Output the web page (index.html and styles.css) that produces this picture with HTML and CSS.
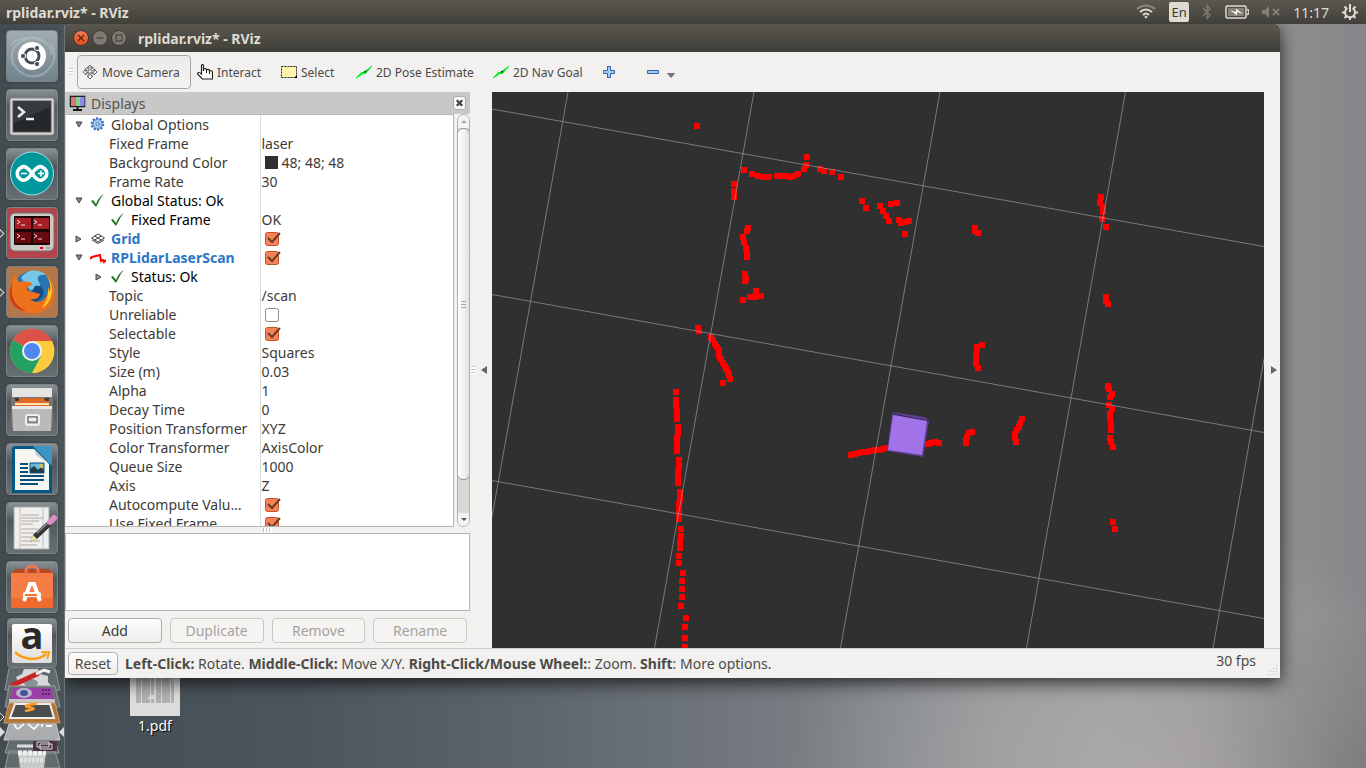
FILE: index.html
```html
<!DOCTYPE html>
<html lang="en">
<head>
<meta charset="utf-8">
<title>rplidar.rviz* - RViz</title>
<link rel="stylesheet" href="styles.css">
</head>
<body>
<header class="panel">
  <span class="panel-title">rplidar.rviz* - RViz</span>
  <div class="indicators">
    <svg width="20" height="16" viewBox="0 0 20 16" fill="none" stroke="#dfdbd2" stroke-width="2"><path d="M1 5Q10-2 19 5" stroke="#8b8880"/><path d="M4 8Q10 3 16 8M7 11Q10 8 13 11"/><circle cx="10" cy="13" r="1" fill="#dfdbd2" stroke-width="1"/></svg>
    <span class="lang">En</span>
    <svg width="10" height="16" viewBox="0 0 10 16" fill="none" stroke="#7d7b74" stroke-width="1.3"><path d="M1 4l7 7-3 3.500V1.500L8 5l-7 7"/></svg>
    <svg width="24" height="14" viewBox="0 0 24 14"><rect x="1" y="1" width="20" height="12" rx="1.500" fill="none" stroke="#dfdbd2" stroke-width="1.500"/><rect x="3" y="3" width="16" height="8" fill="#85827a"/><path d="M22 4.500q2 0 2 2.500t-2 2.500" fill="none" stroke="#dfdbd2" stroke-width="1.500"/><path d="M5 5l6 2V3.500l7 5.500-6-2v3.500z" fill="#f4f1ea"/></svg>
    <svg width="18" height="12" viewBox="0 0 18 12"><path d="M0 4h3l4-4v12L3 8H0z" fill="#817f77"/><path d="M11 3l6 6m0-6l-6 6" stroke="#817f77" stroke-width="2"/></svg>
    <span class="clock">11:17</span>
    <svg width="16" height="16" viewBox="0 0 16 16" fill="none" stroke="#dfdbd2"><path d="M5.500 4a5 5 0 1 0 5 0M8 0v8" stroke-width="2"/><path d="M2.500 2.500l2 2m9-2l-2 2M0 8.500h3m10 0h3M2.500 14l2-2m9 2l-2-2M8 13v3" stroke-width="2"/></svg>
  </div>
</header>

<div class="desktop">
<nav class="launcher" aria-label="Launcher">
  <button class="tile dash" aria-label="Search"><svg viewBox="0 0 52 52"><path d="M5 15C17 2 45 7 46 25M8 36C-2 18 20 2 36 10M45 14c10 17-4 32-18 32M42 40C28 55 5 42 6 24" fill="none" stroke="#c4cdd1" stroke-opacity=".4" stroke-width="2"/><circle cx="26" cy="26" r="14" fill="#fff"/><circle cx="26" cy="26" r="7" fill="none" stroke="#42505a" stroke-width="3"/><g fill="#42505a" stroke="#fff"><circle cx="17" cy="26" r="2.600"/><circle cx="31" cy="18" r="2.600"/><circle cx="31" cy="34" r="2.600"/></g></svg></button>
  <button class="tile" aria-label="Terminal"><svg viewBox="0 0 52 52"><rect x="4" y="9" width="44" height="37" rx="2" fill="#d8d8d8" stroke="#8c8c8c"/><rect x="7" y="12" width="38" height="31" fill="#25282a" stroke="#555"/><path d="M8 13h36v5L8 34z" fill="#fff" opacity=".09"/><path d="M12 18l6 5-6 5M20 30h8" fill="none" stroke="#eee" stroke-width="2.500"/></svg></button>
  <button class="tile" aria-label="Arduino"><svg viewBox="0 0 52 52"><circle cx="26" cy="25.500" r="21.500" fill="#00979c" stroke="#a4dfe0"/><path d="M26 25.500c-4-6-8-8-11-6-5 3-5 9 0 12 3 2 7 0 11-6s8-8 11-6c5 3 5 9 0 12-3 2-7 0-11-6z" fill="none" stroke="#fff" stroke-width="3.500"/><path d="M15 25.500h6M32 25.500h6m-3-3v6" stroke="#fff" stroke-width="1.600"/></svg></button>
  <button class="tile running red" aria-label="Terminator"><svg viewBox="0 0 52 52"><rect x="4" y="6" width="44" height="38" rx="5" fill="#c9c9c5" stroke="#74716e"/><rect x="8" y="9" width="36" height="29" rx="1" fill="#1e0607"/><path d="M9 11h16v11H9zM27 11h16v11H27z" fill="#a81e25"/><path d="M9 25h16v11H9zM27 25h16v11H27z" fill="#690911"/><path d="M11 13l3 2-3 2m4 1h4M28 13l3 2-3 2m4 1h4M11 27l3 2-3 2m4 1h4M28 27l3 2-3 2m4 1h4" fill="none" stroke="#f5d5d5"/><path d="M34 41h3" stroke="#e00" stroke-width="2"/><path d="M40 41h4" stroke="#888"/></svg></button>
  <button class="tile running orange" aria-label="Firefox"><svg viewBox="0 0 52 52"><circle cx="27" cy="25" r="20" fill="#2774ae"/><path d="M15 12c5-9 18-10 25-3-8-1-10 3-7 7 3 5-2 11-9 8z" fill="#76c6e9"/><path d="M29 20c8-2 11 7 6 12-6 6-10 4-14 1z" fill="#174c83"/><path d="M8 8l5 8c3-1 6-1 8 0 3-1 5 1 5 3l-5 2c-1 4 2 4 6 5l7 2c-1 5-6 6-10 5 8 7 19 1 18-12 2 2 2 5 1 7 5-6 1-15-3-19 7 4 9 13 8 20-2 14-13 20-25 18C8 44 2 35 4 24c1-5 3-9 4-16z" fill="#ee721c"/><path d="M7 16c-4 14 1 23 13 29C8 44 2 34 4 23z" fill="#cc3c14"/><path d="M41 10c9 11 5 27-5 32 4-6 7-12 6-20l2 4c1-6 0-11-3-16z" fill="#ffc925"/></svg></button>
  <button class="tile" aria-label="Chrome"><svg viewBox="0 0 52 52"><circle cx="26" cy="26" r="22" fill="#fbc935"/><path d="M26 26L7 15A22 22 0 0 1 46 16H26z" fill="#dc5148"/><path d="M7 15A22 22 0 0 0 26 48l9-17-9-5z" fill="#22a163"/><path d="M26 16h20a22 22 0 0 1-20 32l10-17z" fill="#fdcb3e"/><circle cx="26" cy="26" r="10" fill="#f3f3ee"/><circle cx="26" cy="26" r="8" fill="#4f87ee"/></svg></button>
  <button class="tile" aria-label="Files"><svg viewBox="0 0 52 52"><path d="M6 4h40v10H6z" fill="#e5e4e2"/><path d="M5 13h42v30H5z" fill="#777674"/><path d="M9 14h34v9H9z" fill="#433a34"/><path d="M13 14h25l1 3h4v6H9v-6h4z" fill="#dd6b28"/><path d="M9 19h34v2H9z" fill="#ffe2ad"/><path d="M6 22h40l-1 25H7z" fill="#bbbab8"/><path d="M6 22h40v3H6z" fill="#e9e8e6"/><rect x="20" y="31" width="13" height="10" rx="2" fill="#bbb" stroke="#eee" stroke-width="2"/><rect x="22" y="33" width="9" height="5" fill="#eee" stroke="#555"/></svg></button>
  <button class="tile" aria-label="LibreOffice Writer"><svg viewBox="0 0 52 52"><path d="M8 3h27l11 16v31H6V5z" fill="#075785"/><path d="M27 3h19v20z" fill="#3e94c3"/><path d="M9 6h19l15 15v26H9z" fill="#f7f6f2"/><path d="M28 6l15 15-13-9z" fill="#bfcdd4"/><path d="M14 21h8M14 25h8M14 29h8M14 33h24M14 37h24M14 41h18" stroke="#07517b" stroke-width="2"/><path d="M24 20h14v10H24z" fill="#65b9e0"/><path d="M24 30v-4l4-3 4 4 3-3 3 3v3z" fill="#253b47"/><circle cx="35" cy="23" r="2" fill="#e4c537"/><path d="M24 20h14v10H24z" fill="none" stroke="#07517b"/></svg></button>
  <button class="tile" aria-label="Text Editor"><svg viewBox="0 0 52 52"><path d="M8 5h35v42H8z" fill="#efefec" stroke="#aaa"/><path d="M14 5v42" stroke="#e7b3b3"/><path d="M37 5v42" stroke="#b3bfe7"/><path d="M15 13h18M15 16h22M15 19h18M15 22h12M15 27h17M15 31h16M15 35h13M15 39h19M15 43h16" stroke="#aaa"/><path d="M24 40l3-7 15-14 4 4-15 14z" fill="#343737"/><path d="M31 31l12-11" stroke="#8c9190" stroke-width="1.500"/><path d="M24 40l3-7 4 4z" fill="#eee29a"/><path d="M44 20l4-4" stroke="#d88fc4" stroke-width="6" stroke-linecap="round"/></svg></button>
  <button class="tile" aria-label="Software"><svg viewBox="0 0 52 52"><path d="M5 12l5-4h33l4 4z" fill="#b54a24"/><path d="M5 12h42v35H5z" fill="#ee6a2f"/><path d="M5 12h42v25H5z" fill="#f57c43"/><path d="M20 17V9c0-5 12-5 12 0v8" fill="none" stroke="#eb7757" stroke-width="3"/><path d="M18 40l6-17h4l6 17" fill="none" stroke="#fff" stroke-width="4"/><rect x="17" y="31" width="18" height="5" rx="2" fill="#fff"/><path d="M19 34h12" stroke="#f37336" stroke-width="2"/></svg></button>
  <button class="tile amazon" aria-label="Amazon"><span class="amazon-card"><b>a</b><svg viewBox="0 0 40 12"><path d="M2 2c10 9 24 9 33 2" fill="none" stroke="#f90" stroke-width="2.500"/><path d="M30 2h8l-2 7" fill="none" stroke="#f90" stroke-width="2"/></svg></span></button>
  <svg class="folded" viewBox="0 668 65 100" role="img" aria-label="More applications">
    <path d="M9 668h46l5 22H5z" fill="#626a6e" stroke="#92999c"/>
    <path d="M12 687c0-4 3-5 6-5l-2-5 6-3 2-5h14l2 5 8 2v6l4 5z" fill="#d8d9d7"/><ellipse cx="31" cy="683" rx="7" ry="4" fill="#899295"/><path d="M13 685l24-11" stroke="#c92328" stroke-width="5" stroke-linecap="round"/><path d="M36 674l8-4 6 2" fill="none" stroke="#f4f4f4" stroke-width="3"/>
    <path d="M9 686h46l5 21H5z" fill="#687075" stroke="#92999c"/><path d="M13 688h38l3 12H10z" fill="#9a3fa6"/><path d="M9 699h46v4H9z" fill="#c7c7c9"/><ellipse cx="24" cy="693" rx="8" ry="5" fill="#b8b8c9"/><ellipse cx="24" cy="693" rx="4" ry="3" fill="#455298"/><path d="M42 690h9m-9 4h9" stroke="#5f2168" stroke-width="2" stroke-dasharray="2 1"/>
    <path d="M9 703h46l5 20H4z" fill="#b5763a" stroke="#cf9c65"/><path d="M15 704h35l4 14H10z" fill="#4a4d4e" stroke="#eee" stroke-width="2"/><path d="M37 704c-8 0-15 2-9 3s10 2-3 4" fill="none" stroke="#ff9b28" stroke-width="2.500"/>
    <path d="M9 724h47l4 16H4z" fill="#aaacad" stroke="#ccc"/><path d="M14 724l3 5M24 724l-6 5M28 724l6 5 5-5M42 724v3M46 726h6" fill="none" stroke="#f4f4f4" stroke-width="2"/>
    <path d="M9 740h46l4 13H5zM9 751h46l5 17H5z" fill="#626b6e" stroke="#92999c"/><path d="M18 752h28l-2 16H20z" fill="#c5cbc8"/><path d="M17 746h18" stroke="#d8dedb" stroke-width="3"/><path d="M18 753h28" stroke="#eef0ee" stroke-width="5" stroke-dasharray="4 1"/><path d="M20 760h24" stroke="#dde1de" stroke-width="5" stroke-dasharray="3 1"/><path d="M33 741h24v10H33z" fill="#4b3141"/><path d="M37 742h12v5H37zM40 744h12v5H40z" fill="#4b3141" stroke="#ddd"/>
    <path d="M0 713l4 4-4 4" fill="none" stroke="#ddd"/><path d="M0 727l5 5-5 5zM64 727l-5 5 5 5z" fill="#ddd"/>
  </svg>
</nav>

<main class="workspace">
  <a class="file" href="#pdf"><svg width="50" height="50" viewBox="0 0 50 50"><rect width="50" height="50" rx="1" fill="#dcdcdc"/><path d="M6 6h18M6 8h18M6 10h18M6 12h18M6 14h18M6 16h18M6 18h18M6 20h18M6 22h18M6 24h18M6 26h18M6 28h18M6 30h14M6 32h12M6 34h18M6 36h18M26 6h18M26 8h18M26 10h18M26 12h18M26 14h16M26 16h18M26 18h18M26 20h18M26 22h18M26 24h18M26 26h18M26 28h18M26 30h18M26 32h18M26 34h18M26 36h18" stroke="#888" stroke-dasharray="5 1 8 1"/></svg><span>1.pdf</span></a>

  <section class="window">
    <header class="titlebar">
      <button class="wm close" aria-label="Close"><svg viewBox="0 0 16 16"><path d="M5 5l6 6m0-6l-6 6" stroke="#5b2310" stroke-width="1.200"/></svg></button>
      <button class="wm" aria-label="Minimize"><svg viewBox="0 0 16 16"><path d="M4.500 8h7" stroke="#3b3a35"/></svg></button>
      <button class="wm" aria-label="Maximize"><svg viewBox="0 0 16 16"><rect x="5" y="5" width="6" height="6" fill="none" stroke="#3b3a35"/></svg></button>
      <h1>rplidar.rviz* - RViz</h1>
    </header>

    <div class="toolbar" role="toolbar">
      <span class="grip"></span>
      <button class="tool active"><svg viewBox="0 0 16 16"><path d="M8 1l3 3H9v3h3V5l3 3-3 3V9H9v3h2l-3 3-3-3h2V9H4v2L1 8l3-3v2h3V4H5z" fill="#fff" stroke="#444" stroke-width=".8"/><ellipse cx="8" cy="6" rx="5" ry="3" fill="none" stroke="#555" stroke-width=".7"/></svg>Move Camera</button>
      <button class="tool"><svg viewBox="0 0 16 16"><path d="M4.500 10V2c0-2 2-2 2 0v5V5c2-1 3 0 3 1 1-1 3-1 3 1 2-1 3 0 3 2v6h-10l-5-5c0-2 2-2 4 0z" fill="#fff" stroke="#222" stroke-width="1.200"/><path d="M9.500 6v3m3-2v3" stroke="#222"/></svg>Interact</button>
      <button class="tool"><svg viewBox="0 0 16 16"><path d="M.5 2.500h15v11H.5z" fill="#fff3b0" stroke="#222" stroke-dasharray="2 1"/><path d="M16 11v3h-3z"/></svg>Select</button>
      <button class="tool"><svg viewBox="0 0 16 16"><path d="M0 14l6-6 1 1 9-7-7 8-1-1z" fill="#0f3" stroke="#0e2"/><path d="M7 8l4-2-2 3z" fill="#064c12"/></svg>2D Pose Estimate</button>
      <button class="tool"><svg viewBox="0 0 16 16"><path d="M0 14l6-6 1 1 9-7-7 8-1-1z" fill="#0f3" stroke="#0e2"/><path d="M7 8l4-2-2 3z" fill="#064c12"/></svg>2D Nav Goal</button>
      <button class="tool" aria-label="Add tool"><svg viewBox="0 0 16 16"><path d="M4.500 2.500h3v4h4v3h-4v4h-3v-4h-4v-3h4z" fill="#a9cdf1" stroke="#2d63a8"/></svg></button>
      <button class="tool" aria-label="Remove tool"><svg viewBox="0 0 16 16"><path d="M.5 6.500h11v3H.5z" fill="#a9cdf1" stroke="#2d63a8"/></svg><svg class="caret" viewBox="0 0 8 16"><path d="M.5 9.500h7l-3.500 4z" fill="#777" stroke="#555" stroke-width=".7"/></svg></button>
    </div>

    <div class="content">
      <section class="displays">
        <header class="dock-title">
          <svg width="17" height="16" viewBox="0 0 17 16"><rect x=".7" y=".7" width="15.600" height="11.600" fill="#222"/><path d="M2 2h4.500v9H2z" fill="#d8777b"/><path d="M6.500 2h4.500v9H6.500z" fill="#83d487"/><path d="M11 2h4.500v9H11z" fill="#8b8be9"/><path d="M8.500 12v3M4 15h9" stroke="#111" stroke-width="2"/></svg>
          <h2>Displays</h2>
          <button aria-label="Close Displays"><svg viewBox="0 0 12 12"><path d="M3 3l6 6m0-6L3 9" stroke="#444" stroke-width="2.500"/></svg></button>
        </header>
        <div class="tree-area">
          <div class="tree-box">
            <table class="tree">
              <colgroup><col class="name-col"><col></colgroup>
              <tbody>
              <tr><td><div class="row top"><i class="exp open"></i><svg class="ico" viewBox="0 0 16 16"><circle cx="7.500" cy="7" r="5.500" fill="#a8caec" stroke="#3469ad" stroke-width="2.500" stroke-dasharray="2 1.400"/><circle cx="7.500" cy="7" r="4.500" fill="#a8caec" stroke="#5d90cc"/><circle cx="7.500" cy="7" r="1.500" fill="#fff" stroke="#3469ad"/></svg>Global Options</div></td><td></td></tr>
              <tr><td class="plain">Fixed Frame</td><td>laser</td></tr>
              <tr><td class="plain">Background Color</td><td><i class="swatch"></i>48; 48; 48</td></tr>
              <tr><td class="plain">Frame Rate</td><td>30</td></tr>
              <tr class="ok"><td><div class="row top"><i class="exp open"></i><svg class="ico" viewBox="0 0 16 16"><path d="M1 8l2-1 3 4C8 6 10 3 14 1 10 5 9 9 6 14z" fill="#217421"/></svg>Global Status: Ok</div></td><td></td></tr>
              <tr class="ok"><td><div class="row child"><i class="exp"></i><svg class="ico" viewBox="0 0 16 16"><path d="M1 8l2-1 3 4C8 6 10 3 14 1 10 5 9 9 6 14z" fill="#217421"/></svg>Fixed Frame</div></td><td class="value">OK</td></tr>
              <tr><td><div class="row top display"><i class="exp shut"></i><svg class="ico" viewBox="0 0 16 16"><path d="M1.500 7l6.500-4 6.500 4L8 11zM4.700 5l6.600 4M11.300 5L4.700 9M2 9l6 3.500L14 9" fill="none" stroke="#444"/></svg><label for="grid">Grid</label></div></td><td><input id="grid" type="checkbox" checked></td></tr>
              <tr><td><div class="row top display"><i class="exp open"></i><svg class="ico" viewBox="0 0 16 16"><path d="M0 9l2-2 4-1 4-1 1 6 2-1 1 2 2-2" fill="none" stroke="#f00" stroke-width="2"/></svg><label for="scan">RPLidarLaserScan</label></div></td><td><input id="scan" type="checkbox" checked></td></tr>
              <tr class="ok"><td><div class="row child"><i class="exp shut"></i><svg class="ico" viewBox="0 0 16 16"><path d="M1 8l2-1 3 4C8 6 10 3 14 1 10 5 9 9 6 14z" fill="#217421"/></svg>Status: Ok</div></td><td></td></tr>
              <tr><td class="plain">Topic</td><td>/scan</td></tr>
              <tr><td class="plain"><label for="unreliable">Unreliable</label></td><td><input id="unreliable" type="checkbox"></td></tr>
              <tr><td class="plain"><label for="selectable">Selectable</label></td><td><input id="selectable" type="checkbox" checked></td></tr>
              <tr><td class="plain">Style</td><td>Squares</td></tr>
              <tr><td class="plain">Size (m)</td><td>0.03</td></tr>
              <tr><td class="plain">Alpha</td><td>1</td></tr>
              <tr><td class="plain">Decay Time</td><td>0</td></tr>
              <tr><td class="plain">Position Transformer</td><td>XYZ</td></tr>
              <tr><td class="plain">Color Transformer</td><td>AxisColor</td></tr>
              <tr><td class="plain">Queue Size</td><td>1000</td></tr>
              <tr><td class="plain">Axis</td><td>Z</td></tr>
              <tr><td class="plain"><label for="auto">Autocompute Valu…</label></td><td><input id="auto" type="checkbox" checked></td></tr>
              <tr><td class="plain"><label for="fixed">Use Fixed Frame</label></td><td><input id="fixed" type="checkbox" checked></td></tr>
              </tbody>
            </table>
          </div>
          <div class="scrollbar"><span class="arrow up"></span><span class="thumb"></span><span class="arrow down"></span></div>
        </div>
        <div class="hsplit"><i></i></div>
        <div class="description"></div>
        <div class="actions"><button>Add</button><button disabled>Duplicate</button><button disabled>Remove</button><button disabled>Rename</button></div>
      </section>

      <div class="vsplit"><i class="dots"></i><button class="collapse left" aria-label="Hide left panel"></button></div>

      <svg class="view" viewBox="492 92 772 556" preserveAspectRatio="xMidYMid slice" role="img" aria-label="Laser scan">
        <path class="scan" d="M697 126h0M807 157h0M806 165h0M804 169h0M798 174h0M794 176h0M790 177h0M786 176h0M782 176h0M777 176h0M769 177h0M764 177h0M758 176h0M752 174h0M744 170h0M820 169h0M824 171h0M832 172h0M841 177h0M734 184h0M734 191h0M734 197h0
M862 201h0M866 208h0M880 206h0M883 211h0M886 216h0M889 221h0M891 204h0M897 203h0M899 220h0M901 223h0M904 222h0M909 221h0M905 234h0
M748 228h0M747 231h0M743 237h0M744 242h0M746 248h0M747 253h0M747 257h0M745 274h0M746 279h0M745 281h0M743 300h0M750 297h0M755 297h0M761 296h0M756 291h0M698 328h0M699 331h0
M711 337h0M713 340h0M715 344h0M717 347h0M719 350h0M719 356h0M721 359h0M723 363h0M725 366h0M726 369h0M728 372h0M729 375h0M730 379h0M723 383h0
M676 392h0M676 400L676 406M677 410L677 419M678 427L678 434M677 438L677 451M679 460L679 467M678 472L678 483M680 492L680 500M679 504L679 512M679 516L679 519M681 529h0M681 536h0M680 542h0M680 548h0M679 556h0M679 563h0M683 573h0M682 581h0M682 589h0M682 597h0M681 606h0M686 618h0M685 627h0M685 638h0M685 647h0
M851 455h0M855 454h0M859 453h0M863 452h0M867 452h0M871 451h0M875 450h0M879 450h0M883 449h0M887 448h0M928 444h0M931 443h0M935 442h0M939 443h0
M975 228h0M975 231h0M978 233h0M982 345h0M977 347h0M977 350h0M976 356h0M976 360h0M976 364h0M978 368h0M966 443h0M966 440h0M967 437h0M969 433h0M972 432h0M1022 419h0M1020 423h0M1019 427h0M1017 430h0M1015 434h0M1015 438h0M1016 442h0
M1101 197h0M1100 203h0M1103 207h0M1103 212h0M1102 219h0M1106 227h0M1106 297h0M1106 301h0M1108 304h0M1108 386h0M1109 389h0M1112 394h0M1110 397h0M1109 405h0M1112 409h0M1110 414h0M1110 419h0M1111 424h0M1111 430h0M1110 438h0M1111 442h0M1113 447h0M1113 522h0M1115 529h0"/>
        <path class="ground-grid" d="M492 109L1264 246.500M492 294.500L1264 432.500M492 480.500L1264 618.500M568 92L492 517M754 92L654.500 648M940 92L840.500 648M1125.500 92L1026.500 648M1264 359L1213 648"/>
        <path d="M892 415l1-3 32 5 4 4-6 36-36-6z" fill="#5c3f92"/><path d="M893 414l35 7" stroke="#352553"/><path d="M893 415l34 6-5 34-34-5z" fill="#a272e8"/>
      </svg>

      <div class="vsplit narrow"><button class="collapse right" aria-label="Hide right panel"></button></div>
    </div>

    <footer class="statusbar">
      <button>Reset</button>
      <p><b>Left-Click:</b> Rotate. <b>Middle-Click:</b> Move X/Y. <b>Right-Click/Mouse Wheel:</b>: Zoom. <b>Shift</b>: More options.</p>
      <output>30 fps</output>
      <svg width="12" height="12" viewBox="0 0 12 12"><path d="M1 10.500h11M4 7.500h8M7 4.500h5M10 1.500h2" stroke="#bbb8b3" stroke-dasharray="1 2"/></svg>
    </footer>
  </section>
</main>
</div>
</body>
</html>
```

FILE: styles.css
```css
* { box-sizing: border-box; }
body {
  margin: 0;
  height: 100vh;
  display: flex;
  flex-direction: column;
  overflow: hidden;
  font: 14px/19px "Noto Sans", sans-serif;
  color: #3c3b37;
  background:
    radial-gradient(ellipse at 84% 100%, rgba(190, 186, 182, .55), transparent 22%),
    radial-gradient(ellipse at 100% 100%, rgba(70, 70, 70, .4), transparent 14%),
    linear-gradient(90deg, #454e54 5%, #4c555d 22%, #5f676d 40%, #757b80 57%, #939599 73%, #9c9b9b 88%, #8c8c8e 96%, #858589 100%);
}
button { font: inherit; color: inherit; padding: 0; border: 0; background: none; }
h1, h2, p { margin: 0; font-size: inherit; }
svg { display: block; flex: none; }

.panel {
  flex: none;
  height: 24px;
  padding: 0 8px 0 6px;
  display: flex;
  align-items: center;
  justify-content: space-between;
  background: linear-gradient(#5b5850, #403f39);
  color: #dfdbd2;
}
.panel-title, .titlebar h1 { font-size: 14px; font-weight: 700; }
.indicators { display: flex; align-items: center; gap: 13px; }
.lang { width: 20px; height: 20px; line-height: 20px; text-align: center; font-size: 13px; background: #dfdbd2; color: #3c3b37; border-radius: 2px; }

.desktop { flex: 1; min-height: 0; display: flex; }

.launcher {
  flex: none;
  width: 65px;
  padding: 6px 0 0;
  overflow: hidden;
  display: flex;
  flex-direction: column;
  background: linear-gradient(90deg, #424b4f, #4a5357);
  border-right: 1px solid #6c7376;
}
.tile {
  position: relative;
  flex: none;
  width: 52px;
  height: 52px;
  margin: 0 0 7px 6px;
  border-radius: 4px;
  border: 1px solid #7d8487;
  background: linear-gradient(#8a9194, #4f575b 35%, #687074);
  box-shadow: 0 0 2px #2d3335;
}
.tile > svg { width: 52px; height: 52px; margin: -1px; }
.dash { background: linear-gradient(#a1adb2, #71828b); }
.red { background: #b4444b; }
.orange { background: #b5764a; }
.running::before {
  content: "";
  position: absolute;
  left: -11px;
  top: 22px;
  width: 6px;
  height: 6px;
  border: solid #ddd;
  border-width: 1px 1px 0 0;
  transform: rotate(45deg);
}
.tile.amazon { width: 50px; height: 50px; margin: -2px 0 0 7px; }
.amazon-card {
  display: flex;
  flex-direction: column;
  align-items: center;
  width: 40px;
  height: 39px;
  margin: 0 auto;
  border-radius: 2px;
  background: linear-gradient(#fff, #dedede);
  color: #292929;
}
.amazon-card b { height: 26px; font: 700 38px/20px "Open Sans", sans-serif; }
.amazon-card svg { width: 38px; height: 12px; }
.folded { width: 65px; height: 100px; }

.workspace {
  position: relative;
  flex: 1;
  min-width: 0;
  display: flex;
  padding: 0 86px 90px 0;
}
.file {
  position: absolute;
  left: 64px;
  bottom: 33px;
  display: flex;
  flex-direction: column;
  align-items: center;
  width: 52px;
  color: #fff;
  text-decoration: none;
  text-shadow: 1px 1px 1px #000;
}

.window {
  position: relative;
  flex: 1;
  min-width: 0;
  display: flex;
  flex-direction: column;
  background: #f2f1f0;
  border-radius: 5px 5px 0 0;
  box-shadow: 0 4px 18px rgba(0, 0, 0, .75);
  clip-path: inset(0 -60px -60px 0);
}
.titlebar {
  flex: none;
  height: 28px;
  display: flex;
  align-items: center;
  gap: 3px;
  padding-left: 8px;
  border-radius: 5px 5px 0 0;
  background: linear-gradient(#5a574f, #403f39);
  color: #dfdbd2;
}
.titlebar h1 { margin-left: 8px; }
.wm { width: 16px; height: 16px; border-radius: 50%; background: #7c7a73; border: 1px solid #3c3b36; }
.wm svg { margin: -1px; }
.wm.close { background: linear-gradient(#f37c56, #df4c1b); }

.toolbar {
  flex: none;
  height: 40px;
  display: grid;
  grid-template-columns: 12px 114px 84px 75px 137px 110px 44px 44px;
  align-items: center;
  font-size: 12px;
}
.grip { width: 4px; height: 8px; margin-left: 4px; background: repeating-linear-gradient(#c9c6c2 0 1px, #fff 1px 3px); }
.tool { display: flex; align-items: center; gap: 4px; height: 34px; padding: 0 4px 0 6px; white-space: nowrap; color: #4c4b47; }
.tool svg { width: 16px; height: 16px; }
.tool .caret { width: 8px; height: 18px; }
.tool.active { padding-left: 4px; border: 1px solid #a9a6a2; border-radius: 4px; background: linear-gradient(#eceae8, #f5f4f3); }

.content {
  flex: 1;
  min-height: 0;
  display: grid;
  grid-template: minmax(0, 1fr) / 405px 22px minmax(0, 1fr) 16px;
}
.displays { display: flex; flex-direction: column; min-height: 0; }
.dock-title { flex: none; height: 22px; display: flex; align-items: center; gap: 5px; padding: 0 4px; background: #c8c8c8; color: #55544f; }
.dock-title h2 { flex: 1; font-weight: 400; }
.dock-title button { width: 13px; height: 14px; border-radius: 3px; background: #f8f8f8; border: 1px solid #aaa; }
.dock-title button svg { width: 11px; height: 12px; }

.tree-area { flex: 1; min-height: 0; display: flex; gap: 3px; }
.tree-box { flex: 1; min-width: 0; overflow: hidden; background: #fff; border: 1px solid #b9b6b2; border-left-color: #dcdad8; }
.tree { width: 100%; border-collapse: collapse; table-layout: fixed; }
.name-col { width: 194px; }
.tree td { height: 19px; padding: 0 0 0 1px; white-space: nowrap; vertical-align: middle; }
.tree td:first-child { padding: 0; border-right: 1px solid #dcdcdc; }
.tree td.plain:first-child { padding-left: 43px; }
.row { display: flex; align-items: center; height: 19px; }
.row.top { padding-left: 9px; }
.row.child { padding-left: 29px; }
.ok { color: #000; }
.ok .value { color: #3c3b37; }
.display { color: #2a76c6; font-weight: 700; }
.ico { width: 16px; height: 16px; margin-right: 5px; }
.exp { flex: none; width: 15px; height: 8px; background: center left / 8px 8px no-repeat; }
.exp.open { background-image: url("data:image/svg+xml,%3Csvg xmlns='http://www.w3.org/2000/svg' viewBox='0 0 8 8'%3E%3Cpath d='M1 1h6l-3 5z' fill='%23888' stroke='%23444'/%3E%3C/svg%3E"); }
.exp.shut { background-image: url("data:image/svg+xml,%3Csvg xmlns='http://www.w3.org/2000/svg' viewBox='0 0 8 8'%3E%3Cpath d='M1 1v6l5-3z' fill='%23999' stroke='%23444'/%3E%3C/svg%3E"); }
.swatch { display: inline-block; width: 13px; height: 13px; margin: 0 4px 0 3px; vertical-align: -1px; background: #303030; }
.tree input {
  appearance: none;
  display: block;
  width: 17px;
  height: 16px;
  margin: 0 0 0 3px;
  background: url("data:image/svg+xml,%3Csvg xmlns='http://www.w3.org/2000/svg' viewBox='0 0 17 16'%3E%3Crect x='.5' y='1.500' width='13' height='13' rx='2' fill='white' stroke='%23888'/%3E%3C/svg%3E");
}
.tree input:checked {
  background: url("data:image/svg+xml,%3Csvg xmlns='http://www.w3.org/2000/svg' viewBox='0 0 17 16'%3E%3Crect x='.5' y='1.500' width='13' height='13' rx='2' fill='%23f58357' stroke='%23c4512b'/%3E%3Cpath d='M3 7l4 4 8-9' fill='none' stroke='%236b3a2a' stroke-width='2'/%3E%3C/svg%3E");
}

.scrollbar { width: 13px; display: flex; flex-direction: column; border: 1px solid #b3b0ab; border-radius: 7px; background: #dad8d5; overflow: hidden; }
.arrow { flex: none; height: 13px; display: grid; place-items: center; background: #f5f4f2; }
.arrow::before { content: ""; border: solid transparent; border-width: 0 3px 3px; border-bottom-color: #aaa; }
.arrow.down::before { border-width: 3px 3px 0; border-top-color: #555; }
.thumb { flex: 1; margin: 0 -1px 33px; border: 1px solid #999691; border-radius: 6px; background: repeating-linear-gradient(#aaa 0 1px, transparent 1px 3px) center / 5px 7px no-repeat, linear-gradient(90deg, #fff, #e5e3e1); }
.hsplit { flex: none; height: 6px; display: grid; place-items: center; }
.hsplit i { width: 9px; height: 4px; background: repeating-linear-gradient(90deg, #c2bfbb 0 1px, #fff 1px 3px); }
.description { flex: none; height: 78px; background: #fff; border: 1px solid #b9b6b2; }
.actions { flex: none; display: grid; grid-template-columns: repeat(4, 1fr); gap: 8px; padding: 7px 3px 5px; }
.actions button, .statusbar button {
  height: 25px;
  border: 1px solid #b1aea9;
  border-radius: 4px;
  background: linear-gradient(#fdfdfd, #efeeec);
}
.actions button:disabled { color: #a5a29e; border-color: #cbc8c4; background: #f5f4f3; }

.vsplit { position: relative; display: flex; align-items: center; justify-content: space-between; padding: 0 5px 0 1px; }
.vsplit.narrow { padding: 0 3px 0 7px; }
.dots { width: 4px; height: 8px; background: repeating-linear-gradient(#c4c1bd 0 1px, #fff 1px 3px); }
.collapse { width: 6px; height: 8px; background: #666; }
.collapse.left { clip-path: polygon(100% 0, 100% 100%, 0 50%); }
.collapse.right { clip-path: polygon(0 0, 100% 50%, 0 100%); }
.view { width: 100%; height: 100%; background: #303030; }
.scan { fill: none; stroke: #f00; stroke-width: 6; stroke-linecap: square; }
.ground-grid { fill: none; stroke: #a0a0a0; stroke-opacity: .65; }

.statusbar { flex: none; height: 30px; display: flex; align-items: center; gap: 7px; padding: 0 2px 0 3px; border-top: 1px solid #cfcdca; color: #4c4b47; }
.statusbar button { width: 50px; height: 23px; }
.statusbar p { flex: 1; white-space: nowrap; }
.statusbar output { padding: 0 3px 6px 0; }
.statusbar > svg { align-self: flex-end; margin-bottom: 2px; }
```
